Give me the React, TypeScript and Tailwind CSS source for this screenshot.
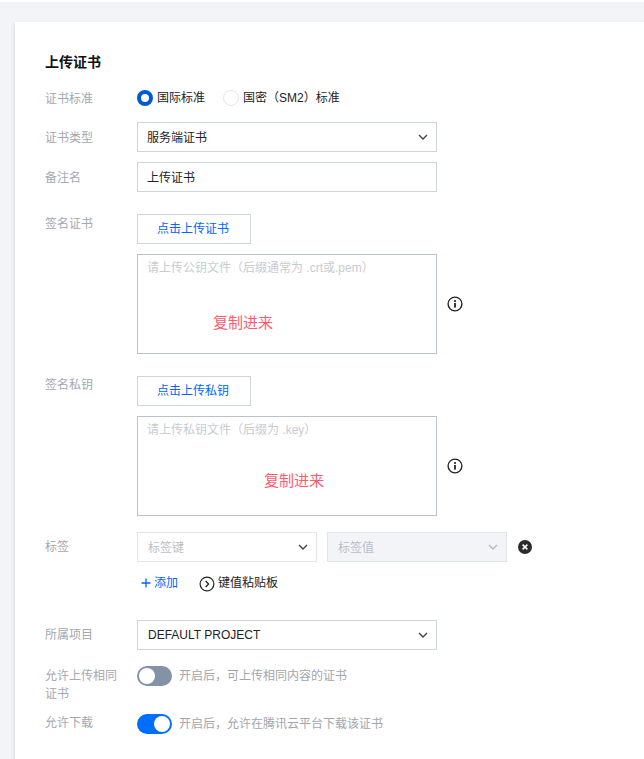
import React from "react";

const Chevron = ({ color = "#444" }: { color?: string }) => (
  <svg width="10" height="6" viewBox="0 0 10 6" fill="none" className="shrink-0">
    <path d="M1 1l4 4 4-4" stroke={color} strokeWidth="1.4" />
  </svg>
);

const Row = ({ label, className = "", labelClass = "", children }: { label?: string; className?: string; labelClass?: string; children: React.ReactNode }) => (
  <div className={`flex ${className}`}>
    <div className={`w-[92px] shrink-0 text-[12px] leading-[18px] text-[#a3a8af] ${labelClass}`}>{label}</div>
    <div className="min-w-0 flex-1">{children}</div>
  </div>
);

const Select = ({ text, w, muted, disabled, latin }: { text: string; w: string; muted?: boolean; disabled?: boolean; latin?: boolean }) => (
  <div className={`flex h-[30px] items-center justify-between border pr-[8px] text-[12px] ${latin || muted || disabled ? "pl-[10px]" : "pl-[9px]"} ${w} ${disabled ? "border-[#dfe3ea] bg-[#f2f4f8]" : muted ? "border-[#e3e6ec] bg-white" : "border-[#cfd5de] bg-white"} ${muted || disabled ? "text-[#b9bec6]" : "text-[#222]"}`}>
    <span className={latin ? "block" : "block pt-[2px]"}>{text}</span>
    <Chevron color={disabled ? "#b5bac2" : "#444"} />
  </div>
);

const Upload = ({ text }: { text: string }) => (
  <div className="flex h-[30px] w-[114px] items-center justify-center border border-[#cfd5de] pr-[2px] text-[12px] text-[#0066ff]">{text}</div>
);

const Info = () => (
  <svg width="16" height="16" viewBox="0 0 16 16" fill="none" className="ml-[10px] shrink-0">
    <circle cx="8" cy="8" r="6.9" stroke="#222" strokeWidth="1.4" />
    <rect x="7.1" y="7" width="1.8" height="4.6" fill="#222" />
    <rect x="7.1" y="4.1" width="1.8" height="1.8" fill="#222" />
  </svg>
);

const Area = ({ placeholder, redClass }: { placeholder: string; redClass: string }) => (
  <div className="mt-[10px] flex items-center">
    <div className="relative h-[100px] w-[300px] border border-[#b9c3cf] py-[4px] pl-[9px] pr-[10px] text-[12px] leading-[18px] text-[#c8cbd0]">
      {placeholder}
      <span className={`absolute text-[15px] leading-[22px] text-[#ff5a70] ${redClass}`}>复制进来</span>
    </div>
    <Info />
  </div>
);

const Toggle = ({ on }: { on?: boolean }) => (
  <div className={`flex h-[20px] w-[35px] shrink-0 items-center rounded-full px-[2px] ${on ? "justify-end bg-[#006eff]" : "justify-start bg-[#8492a6]"}`}>
    <div className="h-[16px] w-[16px] rounded-full bg-white" />
  </div>
);

export default function App() {
  return (
    <div className="h-[759px] w-[644px] overflow-hidden bg-white pt-[2px] text-[12px]" style={{ fontFamily: '"Liberation Sans", "Noto Sans CJK SC", sans-serif' }}>
      <div className="h-full bg-[#f3f4f7] pl-[15px] pt-[20px]">
        <div className="h-[740px] bg-white pl-[30px] pt-[31px] shadow-[0_2px_4px_rgba(54,58,80,0.2)]">
          <div className="text-[14px] font-bold leading-[18px] text-[#111]">上传证书</div>

          <Row label="证书标准" className="mt-[18px]" labelClass="pt-px">
            <div className="flex h-[18px] items-center text-[12px] text-[#222]">
              <div className="h-[16px] w-[16px] rounded-full border-[4px] border-[#0058d8] bg-white" />
              <span className="ml-[4px]">国际标准</span>
              <div className="ml-[18px] h-[16px] w-[16px] rounded-full border border-[#e3e6ec] bg-white" />
              <span className="ml-[4px]">国密（SM2）标准</span>
            </div>
          </Row>

          <Row label="证书类型" className="mt-[14px] items-center" labelClass="pt-[2px]">
            <Select text="服务端证书" w="w-[300px]" />
          </Row>

          <Row label="备注名" className="mt-[10px] items-center" labelClass="pt-[2px]">
            <div className="flex h-[30px] w-[300px] items-center border border-[#cfd5de] pl-[9px] pt-[2px] text-[12px] text-[#222]">上传证书</div>
          </Row>

          <Row label="签名证书" className="mt-[22px]" labelClass="pt-px">
            <Upload text="点击上传证书" />
            <Area placeholder="请上传公钥文件（后缀通常为 .crt或.pem）" redClass="left-[75px] top-[57px]" />
          </Row>

          <Row label="签名私钥" className="mt-[22px]">
            <Upload text="点击上传私钥" />
            <Area placeholder="请上传私钥文件（后缀为 .key）" redClass="left-[126px] top-[53px]" />
          </Row>

          <Row label="标签" className="mt-[16px]" labelClass="pt-[6px]">
            <div className="flex items-center">
              <Select text="标签键" w="w-[180px]" muted />
              <div className="ml-[10px]"><Select text="标签值" w="w-[180px]" disabled /></div>
              <svg width="14" height="14" viewBox="0 0 14 14" className="ml-[11px] shrink-0">
                <circle cx="7" cy="7" r="7" fill="#2b2b2b" />
                <path d="M4.6 4.6l4.8 4.8M9.4 4.6l-4.8 4.8" stroke="#fff" strokeWidth="1.5" />
              </svg>
            </div>
            <div className="mt-[12px] flex h-[18px] items-center">
              <svg width="12" height="12" viewBox="0 0 12 12" className="ml-[3px] shrink-0">
                <path d="M6 1.5v9M1.5 6h9" stroke="#0066ff" strokeWidth="1.3" />
              </svg>
              <span className="ml-[2px] text-[#0066ff]">添加</span>
              <svg width="16" height="16" viewBox="0 0 16 16" fill="none" className="ml-[21px] mt-px shrink-0">
                <circle cx="8" cy="8" r="6.9" stroke="#222" strokeWidth="1.2" />
                <path d="M6.6 5l3 3-3 3" stroke="#222" strokeWidth="1.3" />
              </svg>
              <span className="ml-[3px] text-[#222]">键值粘贴板</span>
            </div>
          </Row>

          <Row label="所属项目" className="mt-[28px] items-center">
            <Select text="DEFAULT PROJECT" w="w-[300px]" latin />
          </Row>

          <Row label="允许上传相同证书" className="mt-[16px]" labelClass="pr-[15px] pt-px">
            <div className="flex items-center">
              <Toggle />
              <span className="ml-[7px] text-[#a2a6ac]">开启后，可上传相同内容的证书</span>
            </div>
          </Row>

          <Row label="允许下载" className="mt-[11px]" labelClass="">
            <div className="flex items-center">
              <Toggle on />
              <span className="ml-[7px] text-[#a2a6ac]">开启后，允许在腾讯云平台下载该证书</span>
            </div>
          </Row>
        </div>
      </div>
    </div>
  );
}
